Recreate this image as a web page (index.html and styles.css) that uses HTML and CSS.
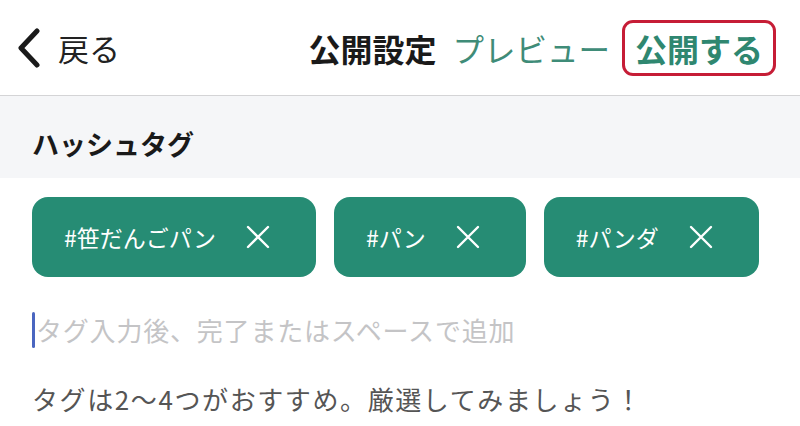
FILE: index.html
```html
<!DOCTYPE html>
<html lang="ja">
<head>
  <meta charset="UTF-8">
  <meta name="viewport" content="width=device-width, initial-scale=1.0">
  <title>公開設定</title>
  <link rel="stylesheet" href="styles.css">
</head>
<body>
  <header class="topbar">
    <a class="back" href="#">
      <svg class="back-icon" width="24" height="40" viewBox="0 0 24 40">
        <path d="M20 3 L4 20 L20 37" fill="none" stroke="#1a1a1a" stroke-width="5" stroke-linecap="round" stroke-linejoin="round"/>
      </svg>
      <span>戻る</span>
    </a>
    <div class="actions">
      <h1 class="title">公開設定</h1>
      <a class="preview" href="#">プレビュー</a>
      <a class="publish" href="#">公開する</a>
    </div>
  </header>

  <section class="section-head">
    <h2>ハッシュタグ</h2>
  </section>

  <div class="tags">
    <div class="tag">
      <span>#笹だんごパン</span>
      <svg class="tag-x" width="24" height="24" viewBox="0 0 24 24">
        <path d="M2 2 L22 22 M22 2 L2 22" stroke="#fff" stroke-width="2.4" stroke-linecap="round"/>
      </svg>
    </div>
    <div class="tag">
      <span>#パン</span>
      <svg class="tag-x" width="24" height="24" viewBox="0 0 24 24">
        <path d="M2 2 L22 22 M22 2 L2 22" stroke="#fff" stroke-width="2.4" stroke-linecap="round"/>
      </svg>
    </div>
    <div class="tag">
      <span>#パンダ</span>
      <svg class="tag-x" width="24" height="24" viewBox="0 0 24 24">
        <path d="M2 2 L22 22 M22 2 L2 22" stroke="#fff" stroke-width="2.4" stroke-linecap="round"/>
      </svg>
    </div>
  </div>

  <div class="tag-input">
    <span class="caret"></span>
    <span class="placeholder">タグ入力後、完了またはスペースで追加</span>
  </div>

  <p class="hint">タグは2～4つがおすすめ。厳選してみましょう！</p>
</body>
</html>
```

FILE: styles.css
```css
body {
  margin: 0;
  font-family: "Noto Sans CJK JP", "Noto Sans", sans-serif;
  background-color: #ffffff;
  color: #1a1a1a;
}
a {
  text-decoration: none;
}
.topbar {
  height: 95px;
  border-bottom: 1px solid #d4d4d6;
  display: flex;
  align-items: center;
  padding: 0 24px 0 17px;
}
.back {
  display: flex;
  align-items: center;
  gap: 17px;
  color: #222;
  font-size: 31px;
}
.back-icon {
  display: block;
}
.actions {
  margin-left: auto;
  display: flex;
  align-items: center;
}
.title {
  margin: 0;
  font-size: 32px;
  font-weight: bold;
  color: #1a1a1a;
}
.preview {
  margin-left: 16px;
  font-size: 31.5px;
  color: #3f8c78;
}
.publish {
  margin-left: 12px;
  font-size: 32px;
  font-weight: bold;
  color: #2f8770;
  border: 3px solid #c61d36;
  border-radius: 11px;
  padding: 0 10px;
  height: 50px;
  display: flex;
  align-items: center;
}
.section-head {
  background-color: #f5f6f8;
  padding: 33px 32px 19px;
}
.section-head h2 {
  margin: 0;
  font-size: 27px;
  line-height: 30px;
  font-weight: bold;
}
.tags {
  display: flex;
  gap: 18px;
  padding: 19px 32px 0;
}
.tag {
  height: 80px;
  display: flex;
  align-items: center;
  background-color: #268c74;
  color: #ffffff;
  border-radius: 16px;
  padding: 0 46px 0 32px;
  font-size: 23px;
}
.tag-x {
  margin-left: 30px;
  display: block;
}
.tag-input {
  display: flex;
  align-items: center;
  margin: 35px 32px 0;
  height: 36px;
}
.caret {
  width: 3px;
  height: 36px;
  border-radius: 2px;
  background-color: #4a66c0;
}
.placeholder {
  margin-left: 1px;
  font-size: 26px;
  line-height: 36px;
  letter-spacing: 0.8px;
  color: #c4c4c6;
}
.hint {
  margin: 33px 32px 0;
  font-size: 26px;
  line-height: 36px;
  letter-spacing: 1.6px;
  color: #555555;
}
```
